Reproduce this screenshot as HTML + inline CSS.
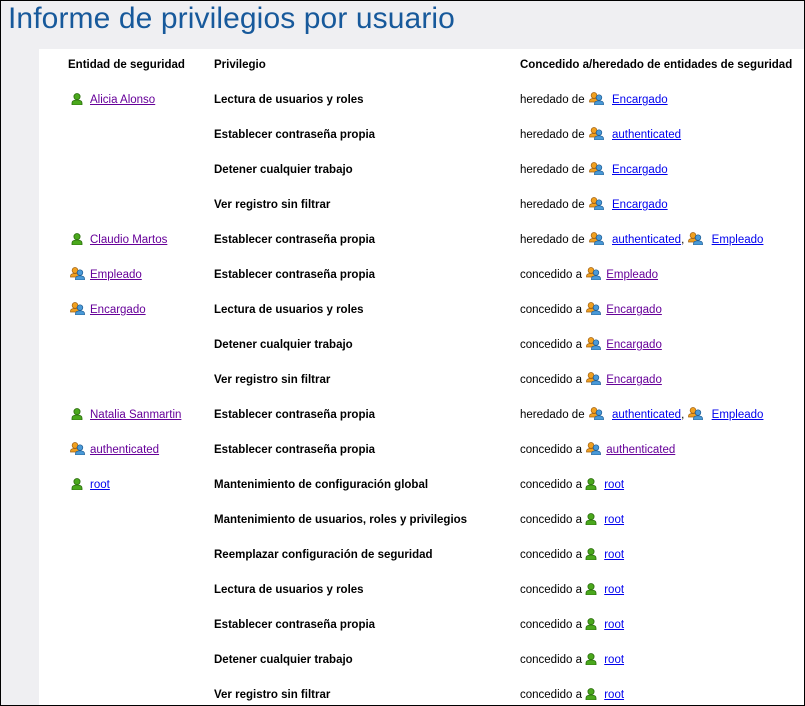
<!DOCTYPE html>
<html><head><meta charset="utf-8"><style>
*{margin:0;padding:0;box-sizing:border-box}
html,body{width:805px;height:706px;overflow:hidden;background:#fff}
#f{position:absolute;left:0;top:0;width:805px;height:706px;border:1px solid #000;background:#efeff2;overflow:hidden}
h1{position:absolute;left:7px;top:1px;font:normal 30px "Liberation Sans",sans-serif;color:#17599b;letter-spacing:0.1px}
#w{position:absolute;left:38px;top:48px;right:0;bottom:0;background:#fff}
.t{position:absolute;font:11.5px/16px "Liberation Sans",sans-serif;color:#000;white-space:nowrap;margin-top:1px}
.b{font-weight:bold}
a{color:#0000ee;text-decoration:underline}
a.v{color:#660099}
svg{vertical-align:-2px}
.u{margin-right:7px}
.g{margin-right:5px}
.c .g{margin-left:1px}
</style></head><body><div id="f">
<h1>Informe de privilegios por usuario</h1>
<div id="w"></div>
<svg width="0" height="0" style="position:absolute"><defs>
<g id="u"><circle cx="6" cy="3.6" r="3.1" fill="#4aa81c" stroke="#2a6b0c" stroke-width=".8"/><path d="M1 12V10Q1 7 6 7Q11 7 11 10V12Z" fill="#4aa81c" stroke="#2a6b0c" stroke-width=".8"/></g>
<g id="g"><circle cx="5" cy="3.4" r="2.9" fill="#f0a020" stroke="#a06010" stroke-width=".7"/><path d="M0.5 10V9Q0.5 6.5 5 6.5Q9.5 6.5 9.5 9V10Z" fill="#f0a020" stroke="#a06010" stroke-width=".7"/><circle cx="10" cy="5.6" r="2.8" fill="#4a9ad8" stroke="#1d5a90" stroke-width=".7"/><path d="M5.5 13V11.5Q5.5 8.8 10 8.8Q14.5 8.8 14.5 11.5V13Z" fill="#4a9ad8" stroke="#1d5a90" stroke-width=".7"/></g>
</defs></svg>
<div class="t b" style="left:67px;top:55px">Entidad de seguridad</div>
<div class="t b" style="left:213px;top:55px">Privilegio</div>
<div class="t b" style="left:519px;top:55px">Concedido a/heredado de entidades de seguridad</div>

<div class="t" style="left:70px;top:90px"><svg class="u" width="12" height="12"><use href="#u"/></svg><a class="v">Alicia Alonso</a></div>
<div class="t" style="left:70px;top:230px"><svg class="u" width="12" height="12"><use href="#u"/></svg><a class="v">Claudio Martos</a></div>
<div class="t" style="left:69px;top:265px"><svg class="g" width="15" height="13"><use href="#g"/></svg><a class="v">Empleado</a></div>
<div class="t" style="left:69px;top:300px"><svg class="g" width="15" height="13"><use href="#g"/></svg><a class="v">Encargado</a></div>
<div class="t" style="left:70px;top:405px"><svg class="u" width="12" height="12"><use href="#u"/></svg><a class="v">Natalia Sanmartin</a></div>
<div class="t" style="left:69px;top:440px"><svg class="g" width="15" height="13"><use href="#g"/></svg><a class="v">authenticated</a></div>
<div class="t" style="left:70px;top:475px"><svg class="u" width="12" height="12"><use href="#u"/></svg><a>root</a></div>

<div class="t b" style="left:213px;top:90px">Lectura de usuarios y roles</div>
<div class="t b" style="left:213px;top:125px">Establecer contraseña propia</div>
<div class="t b" style="left:213px;top:160px">Detener cualquier trabajo</div>
<div class="t b" style="left:213px;top:195px">Ver registro sin filtrar</div>
<div class="t b" style="left:213px;top:230px">Establecer contraseña propia</div>
<div class="t b" style="left:213px;top:265px">Establecer contraseña propia</div>
<div class="t b" style="left:213px;top:300px">Lectura de usuarios y roles</div>
<div class="t b" style="left:213px;top:335px">Detener cualquier trabajo</div>
<div class="t b" style="left:213px;top:370px">Ver registro sin filtrar</div>
<div class="t b" style="left:213px;top:405px">Establecer contraseña propia</div>
<div class="t b" style="left:213px;top:440px">Establecer contraseña propia</div>
<div class="t b" style="left:213px;top:475px">Mantenimiento de configuración global</div>
<div class="t b" style="left:213px;top:510px">Mantenimiento de usuarios, roles y privilegios</div>
<div class="t b" style="left:213px;top:545px">Reemplazar configuración de seguridad</div>
<div class="t b" style="left:213px;top:580px">Lectura de usuarios y roles</div>
<div class="t b" style="left:213px;top:615px">Establecer contraseña propia</div>
<div class="t b" style="left:213px;top:650px">Detener cualquier trabajo</div>
<div class="t b" style="left:213px;top:685px">Ver registro sin filtrar</div>

<div class="t c" style="left:519px;top:90px">heredado de <svg class="g" width="15" height="13"><use href="#g"/></svg> <a>Encargado</a></div>
<div class="t c" style="left:519px;top:125px">heredado de <svg class="g" width="15" height="13"><use href="#g"/></svg> <a>authenticated</a></div>
<div class="t c" style="left:519px;top:160px">heredado de <svg class="g" width="15" height="13"><use href="#g"/></svg> <a>Encargado</a></div>
<div class="t c" style="left:519px;top:195px">heredado de <svg class="g" width="15" height="13"><use href="#g"/></svg> <a>Encargado</a></div>
<div class="t c" style="left:519px;top:230px">heredado de <svg class="g" width="15" height="13"><use href="#g"/></svg> <a>authenticated</a>, <svg class="g" width="15" height="13"><use href="#g"/></svg> <a>Empleado</a></div>
<div class="t c" style="left:519px;top:265px">concedido a <svg class="g" width="15" height="13"><use href="#g"/></svg><a class="v">Empleado</a></div>
<div class="t c" style="left:519px;top:300px">concedido a <svg class="g" width="15" height="13"><use href="#g"/></svg><a class="v">Encargado</a></div>
<div class="t c" style="left:519px;top:335px">concedido a <svg class="g" width="15" height="13"><use href="#g"/></svg><a class="v">Encargado</a></div>
<div class="t c" style="left:519px;top:370px">concedido a <svg class="g" width="15" height="13"><use href="#g"/></svg><a class="v">Encargado</a></div>
<div class="t c" style="left:519px;top:405px">heredado de <svg class="g" width="15" height="13"><use href="#g"/></svg> <a>authenticated</a>, <svg class="g" width="15" height="13"><use href="#g"/></svg> <a>Empleado</a></div>
<div class="t c" style="left:519px;top:440px">concedido a <svg class="g" width="15" height="13"><use href="#g"/></svg><a class="v">authenticated</a></div>
<div class="t c" style="left:519px;top:475px">concedido a <svg class="u" width="12" height="12"><use href="#u"/></svg><a>root</a></div>
<div class="t c" style="left:519px;top:510px">concedido a <svg class="u" width="12" height="12"><use href="#u"/></svg><a>root</a></div>
<div class="t c" style="left:519px;top:545px">concedido a <svg class="u" width="12" height="12"><use href="#u"/></svg><a>root</a></div>
<div class="t c" style="left:519px;top:580px">concedido a <svg class="u" width="12" height="12"><use href="#u"/></svg><a>root</a></div>
<div class="t c" style="left:519px;top:615px">concedido a <svg class="u" width="12" height="12"><use href="#u"/></svg><a>root</a></div>
<div class="t c" style="left:519px;top:650px">concedido a <svg class="u" width="12" height="12"><use href="#u"/></svg><a>root</a></div>
<div class="t c" style="left:519px;top:685px">concedido a <svg class="u" width="12" height="12"><use href="#u"/></svg><a>root</a></div>
</div></body></html>
